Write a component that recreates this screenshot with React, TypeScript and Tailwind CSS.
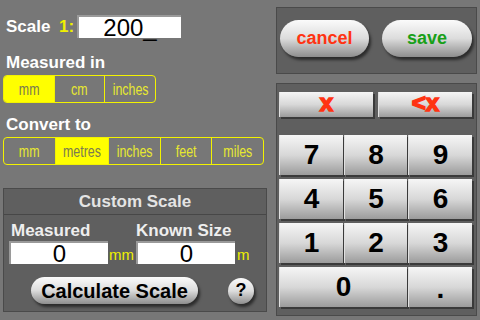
import React, { useState } from 'react';

const FONT = "font-['Liberation_Sans',Arial,sans-serif]";

const measuredUnits = ['mm', 'cm', 'inches'];
const convertUnits = ['mm', 'metres', 'inches', 'feet', 'miles'];

const Segmented: React.FC<{ items: string[]; active: number; width: string }> = ({ items, active, width }) => (
  <div className={`flex ${width} h-[28px] border border-[#f2f200] rounded-[4px] overflow-hidden`}>
    {items.map((it, i) => (
      <div
        key={it}
        className={`flex-1 flex items-center justify-center ${i > 0 ? 'border-l border-[#f2f200]' : ''} ${
          i === active ? 'bg-[#ffff00] text-[#7a7a50]' : 'text-[#e8e830]'
        }`}
      >
        <span className="inline-block text-[17px] scale-x-[0.73] leading-none">{it}</span>
      </div>
    ))}
  </div>
);

const Pill: React.FC<{ className?: string; children: React.ReactNode }> = ({ className = '', children }) => (
  <div
    className={`flex items-center justify-center rounded-full bg-gradient-to-b from-[#fbfbfb] via-[#dcdcdc] to-[#8e8e8e] shadow-[2px_3px_3px_rgba(0,0,0,0.55)] ${className}`}
  >
    {children}
  </div>
);

const Key: React.FC<{ className?: string; children: React.ReactNode }> = ({ className = '', children }) => (
  <div
    className={`flex items-center justify-center bg-gradient-to-b from-[#f6f6f6] via-[#d8d8d8] to-[#9c9c9c] border-l border-[#e0e0e0] shadow-[2px_2px_0_#3a3a3a] font-bold ${className}`}
  >
    {children}
  </div>
);

const Field: React.FC<{ value: string; className?: string }> = ({ value, className = '' }) => (
  <div
    className={`flex items-center justify-center bg-white border-t-2 border-l-2 border-[#9a9a9a] text-black text-[24px] leading-none ${className}`}
  >
    {value}
  </div>
);

export default function App() {
  const [measured, setMeasured] = useState(0);
  const [convert, setConvert] = useState(1);

  return (
    <div className={`w-[480px] h-[320px] bg-[#777777] flex overflow-hidden select-none ${FONT}`}>
      {/* left column */}
      <div className="w-[270px] pl-[3px] flex flex-col">
        <div className="flex items-center h-[23px] mt-[15px] pl-[3px]">
          <span className="text-white font-bold text-[17px] w-[53px]">Scale</span>
          <span className="text-[#f0f000] font-bold text-[17px] w-[18px]">1:</span>
          <Field value="200_" className="w-[104px] h-[23px]" />
        </div>

        <div className="mt-[13px] pl-[3px] h-[24px] text-white font-bold text-[17px] leading-[24px]">Measured in</div>
        <div onClick={() => setMeasured((measured + 1) % 3)}>
          <Segmented items={measuredUnits} active={measured} width="w-[153px]" />
        </div>

        <div className="mt-[10px] pl-[3px] h-[24px] text-white font-bold text-[17px] leading-[24px]">Convert to</div>
        <div onClick={() => setConvert((convert + 1) % 5)}>
          <Segmented items={convertUnits} active={convert} width="w-[261px]" />
        </div>

        {/* custom scale box */}
        <div className="mt-[23px] w-[264px] h-[124px] bg-[#5f5f5f] border border-[#4a4a4a] flex flex-col">
          <div className="h-[26px] border-b border-[#474747] flex items-center justify-center text-[#e4e4e4] font-bold text-[17px]">
            Custom Scale
          </div>
          <div className="flex pl-[5px] pt-[6px] gap-[2px]">
            <div className="flex flex-col">
              <span className="text-[#eeeeee] font-bold text-[17px] leading-[20px] pl-[2px]">Measured</span>
              <div className="flex items-end">
                <Field value="0" className="w-[99px] h-[23px]" />
                <span className="text-[#f0f000] text-[15px] leading-none pb-[2px] ml-[1px]">mm</span>
              </div>
            </div>
            <div className="flex flex-col">
              <span className="text-[#eeeeee] font-bold text-[17px] leading-[20px]">Known Size</span>
              <div className="flex items-end">
                <Field value="0" className="w-[99px] h-[23px]" />
                <span className="text-[#f0f000] text-[15px] leading-none pb-[2px] ml-[2px]">m</span>
              </div>
            </div>
          </div>
          <div className="flex items-center mt-[13px] pl-[27px]">
            <Pill className="w-[167px] h-[27px] text-black font-bold text-[20px]">Calculate Scale</Pill>
            <Pill className="ml-[30px] w-[26px] h-[26px] text-black font-bold text-[18px]">?</Pill>
          </div>
        </div>
      </div>

      {/* right column */}
      <div className="pl-[6px] pt-[7px] flex flex-col">
        <div className="w-[201px] h-[67px] bg-[#5f5f5f] border border-[#4a4a4a] flex items-start pt-[12px] pl-[3px] gap-[13px]">
          <Pill className="w-[89px] h-[37px] text-[#ff3312] font-bold text-[18px]">cancel</Pill>
          <Pill className="w-[90px] h-[37px] text-[#18a018] font-bold text-[18px]">save</Pill>
        </div>

        <div className="mt-[9px] w-[201px] h-[233px] bg-[#5f5f5f] border border-[#4a4a4a] pl-[2px] pt-[8px]">
          <div className="flex gap-[5px]">
            <Key className="w-[94px] h-[25px] text-[#ff3312] text-[24px] leading-none pb-[3px] [-webkit-text-stroke:1.5px_#ff3312]">x</Key>
            <Key className="w-[94px] h-[25px] text-[#ff3312] text-[24px] leading-none pb-[3px] [-webkit-text-stroke:1.5px_#ff3312]">&lt;x</Key>
          </div>
          <div className="grid grid-cols-[64px_63px_64px] gap-x-[1px] gap-y-[4px] mt-[18px] text-black text-[28px]">
            {['7', '8', '9', '4', '5', '6', '1', '2', '3'].map((n) => (
              <Key key={n} className="h-[40px]">{n}</Key>
            ))}
            <Key className="col-span-2 h-[40px]">0</Key>
            <Key className="h-[40px] pt-[4px]">.</Key>
          </div>
        </div>
      </div>
    </div>
  );
}
